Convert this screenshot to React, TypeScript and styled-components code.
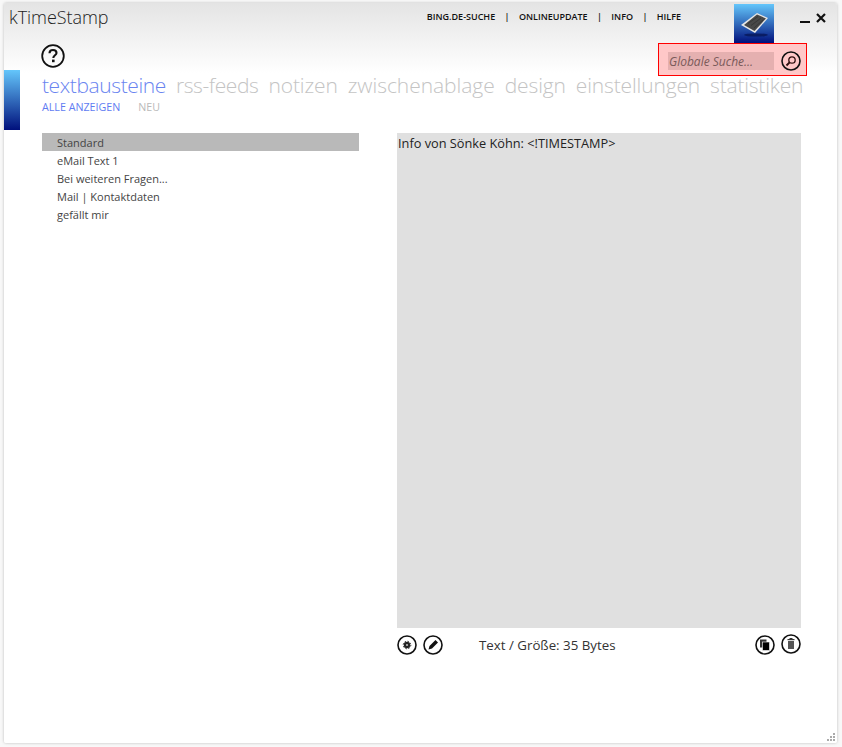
import React from "react";
import styled, { createGlobalStyle } from "styled-components";

const Global = createGlobalStyle`
    html, body {
        margin: 0;
        padding: 0;
        background: #f8f8f8;
        font-family: "Open Sans", "Liberation Sans", sans-serif;
    }
`;

const Page = styled.div`
    width: 842px;
    height: 747px;
    padding: 3px 4px 4px 4px;
    box-sizing: border-box;
`;

const Window = styled.div`
    position: relative;
    width: 833px;
    height: 740px;
    background: linear-gradient(#e4e4e4 0, #ffffff 70px);
    box-shadow: 0 0 3px rgba(0, 0, 0, 0.25);
    border-radius: 2px;
    overflow: hidden;
`;

const TopBar = styled.div`
    display: flex;
    height: 40px;
`;

const AppTitle = styled.div`
    padding: 2px 0 0 5px;
    font-size: 18px;
    line-height: 25px;
    font-weight: 300;
    letter-spacing: -0.05px;
    color: #222;
    flex: 1;
`;

const TopLinks = styled.div`
    display: flex;
    gap: 9.4px;
    padding-top: 7px;
    font-size: 9px;
    line-height: 13px;
    font-weight: 600;
    color: #111;
    margin-right: 53px;
`;

const Tile = styled.div`
    width: 40px;
    height: 39px;
    margin-top: 1px;
    background: linear-gradient(#64c6fb, #00107c);
`;

const WindowButtons = styled.div`
    display: flex;
    gap: 6px;
    padding: 9px 11px 0 26px;
`;

const SideTile = styled.div`
    position: absolute;
    left: 0;
    top: 67px;
    width: 16px;
    height: 60px;
    background: linear-gradient(#64c6fb, #00107c);
`;

const HelpRow = styled.div`
    display: flex;
    justify-content: space-between;
    padding-left: 37px;
    height: 28px;
`;

const HelpIcon = styled.svg`
    margin-top: 1px;
`;

const SearchBox = styled.div`
    display: flex;
    align-items: center;
    width: 149px;
    height: 33px;
    box-sizing: border-box;
    margin: 0 30px 0 0;
    padding: 3px 0 0 9px;
    background: #ffc8c8;
    border: 1px solid #f00;
`;

const SearchField = styled.div`
    width: 106px;
    height: 18px;
    background: #e5b0b0;
    font-size: 12px;
    line-height: 20px;
    font-style: italic;
    color: #7a5a5a;
    padding-left: 1px;
    box-sizing: border-box;
    margin-right: 7px;
`;

const TabRow = styled.div`
    display: flex;
    gap: 10px;
    padding-left: 38px;
    height: 29px;
    font-size: 21px;
    line-height: 29px;
    font-weight: 300;
    white-space: nowrap;
`;

const Tab = styled.span<{ $active?: boolean; $track?: number }>`
    color: ${(p) => (p.$active ? "#6a84f0" : "#c4c4c4")};
    letter-spacing: ${(p) => p.$track ?? -0.12}px;
`;

const SubRow = styled.div`
    display: flex;
    gap: 18px;
    padding-left: 38px;
    height: 33px;
    font-size: 10.7px;
    line-height: 15px;
`;

const SubLink = styled.span<{ $active?: boolean }>`
    color: ${(p) => (p.$active ? "#5f7cf2" : "#b9b9b9")};
`;

const Content = styled.div`
    display: flex;
    padding-left: 38px;
`;

const List = styled.div`
    width: 317px;
    margin-right: 38px;
`;

const ListItem = styled.div<{ $selected?: boolean }>`
    height: 18px;
    line-height: 20px;
    padding-left: 15px;
    font-size: 11px;
    color: #444;
    background: ${(p) => (p.$selected ? "#b9b9b9" : "transparent")};
`;

const Editor = styled.div`
    width: 404px;
`;

const EditorText = styled.div`
    height: 495px;
    background: #e0e0e0;
    padding: 1px;
    box-sizing: border-box;
    font-size: 12.75px;
    line-height: 18px;
    color: #222;
`;

const EditorFooter = styled.div`
    display: flex;
    align-items: center;
    height: 34px;
    gap: 6px;
`;

const FooterText = styled.div`
    flex: 1;
    padding-left: 30px;
    font-size: 13.3px;
    color: #333;
`;

const Grip = styled.svg`
    position: absolute;
    right: 1px;
    bottom: 1px;
`;

const RoundSvg = styled.svg<{ $lift?: boolean }>`
    flex: none;
    margin-bottom: ${(p) => (p.$lift ? "2px" : "0")};
`;

const RoundIcon = ({ lift, children }: { lift?: boolean; children: React.ReactNode }) => (
    <RoundSvg $lift={lift} width={20} height={20} viewBox="0 0 20 20">
        <circle cx="10" cy="10" r="9" fill="none" stroke="#111" strokeWidth="1.6" />
        {children}
    </RoundSvg>
);

const tabs = [
    { label: "textbausteine", active: true, track: -0.4 },
    { label: "rss-feeds", track: -0.4 },
    { label: "notizen" },
    { label: "zwischenablage", track: -0.05 },
    { label: "design" },
    { label: "einstellungen", track: -0.15 },
    { label: "statistiken", track: -0.2 },
];

const textBlocks = ["eMail Text 1", "Bei weiteren Fragen...", "Mail | Kontaktdaten", "gefällt mir"];

export default function App() {
    return (
        <Page>
            <Global />
            <Window>
                <TopBar>
                    <AppTitle>kTimeStamp</AppTitle>
                    <TopLinks>
                        <span>BING.DE-SUCHE</span><span>|</span>
                        <span>ONLINEUPDATE</span><span>|</span>
                        <span>INFO</span><span>|</span>
                        <span>HILFE</span>
                    </TopLinks>
                    <Tile>
                        <svg width="40" height="39" viewBox="0 0 40 39">
                            <ellipse cx="22" cy="31" rx="12" ry="1.6" fill="#06124f" opacity="0.7" />
                            <polygon points="7,21 23,9 34,14 21,29" fill="#e6e6e6" />
                            <polygon points="10,21 23,10.5 32,14.5 20.5,27" fill="#484848" />
                            <path d="M14 19.5 L24 12.5 M17 21.5 L27 14 M20 24 L29.5 15.5" stroke="#333" strokeWidth="0.8" />
                        </svg>
                    </Tile>
                    <WindowButtons>
                        <svg width="10" height="12" viewBox="0 0 10 12"><rect x="0" y="9" width="10" height="2" fill="#111" /></svg>
                        <svg width="10" height="12" viewBox="0 0 10 12"><path d="M1 2 L9 10 M9 2 L1 10" stroke="#111" strokeWidth="2.2" /></svg>
                    </WindowButtons>
                </TopBar>
                <HelpRow>
                    <HelpIcon width="24" height="24" viewBox="0 0 24 24">
                        <circle cx="12" cy="12" r="10.8" fill="none" stroke="#111" strokeWidth="1.8" />
                        <path d="M8.5 9.2 C8.5 6.8 10 6 12 6 C14 6 15.5 7.2 15.5 9 C15.5 11.2 12.3 11.4 12.3 14" fill="none" stroke="#111" strokeWidth="2.1" />
                        <rect x="11" y="15.6" width="2.6" height="2.6" fill="#111" />
                    </HelpIcon>
                    <SearchBox>
                        <SearchField>Globale Suche...</SearchField>
                        <RoundIcon>
                            <circle cx="11" cy="9" r="3.2" fill="none" stroke="#301010" strokeWidth="1.3" />
                            <path d="M8.6 11.4 L5.5 14.5" stroke="#301010" strokeWidth="2" />
                        </RoundIcon>
                    </SearchBox>
                </HelpRow>
                <TabRow>
                    {tabs.map((tab) => (
                        <Tab key={tab.label} $active={tab.active} $track={tab.track}>{tab.label}</Tab>
                    ))}
                </TabRow>
                <SubRow>
                    <SubLink $active>ALLE ANZEIGEN</SubLink>
                    <SubLink>NEU</SubLink>
                </SubRow>
                <Content>
                    <List>
                        <ListItem $selected>Standard</ListItem>
                        {textBlocks.map((name) => (
                            <ListItem key={name}>{name}</ListItem>
                        ))}
                    </List>
                    <Editor>
                        <EditorText>Info von Sönke Köhn: &lt;!TIMESTAMP&gt;</EditorText>
                        <EditorFooter>
                            <RoundIcon>
                                <circle cx="10" cy="10" r="3.2" fill="#222" />
                                <circle cx="10" cy="10" r="3.8" fill="none" stroke="#222" strokeWidth="1" strokeDasharray="1.4 1.6" />
                                <circle cx="10" cy="10" r="1.1" fill="#bbb" />
                            </RoundIcon>
                            <RoundIcon>
                                <path d="M5.5 14.5 L6.5 11 L12.5 5 L15 7.5 L9 13.5 Z" fill="#111" />
                            </RoundIcon>
                            <FooterText>Text / Größe: 35 Bytes</FooterText>
                            <RoundIcon>
                                <rect x="5" y="4.5" width="6.5" height="8" fill="#333" />
                                <rect x="7.5" y="7" width="7" height="8.5" fill="#000" stroke="#fff" strokeWidth="0.6" />
                            </RoundIcon>
                            <RoundIcon lift>
                                <rect x="6.5" y="5" width="7" height="1.2" fill="#333" />
                                <rect x="8.5" y="4" width="3" height="1" fill="#333" />
                                <rect x="7" y="7" width="6" height="8" fill="#555" />
                            </RoundIcon>
                        </EditorFooter>
                    </Editor>
                </Content>
                <SideTile />
                <Grip width="10" height="10" viewBox="0 0 10 10" fill="#aaa">
                    <rect x="7" y="1" width="2" height="2" />
                    <rect x="4" y="4" width="2" height="2" />
                    <rect x="7" y="4" width="2" height="2" />
                    <rect x="1" y="7" width="2" height="2" />
                    <rect x="4" y="7" width="2" height="2" />
                    <rect x="7" y="7" width="2" height="2" />
                </Grip>
            </Window>
        </Page>
    );
}
